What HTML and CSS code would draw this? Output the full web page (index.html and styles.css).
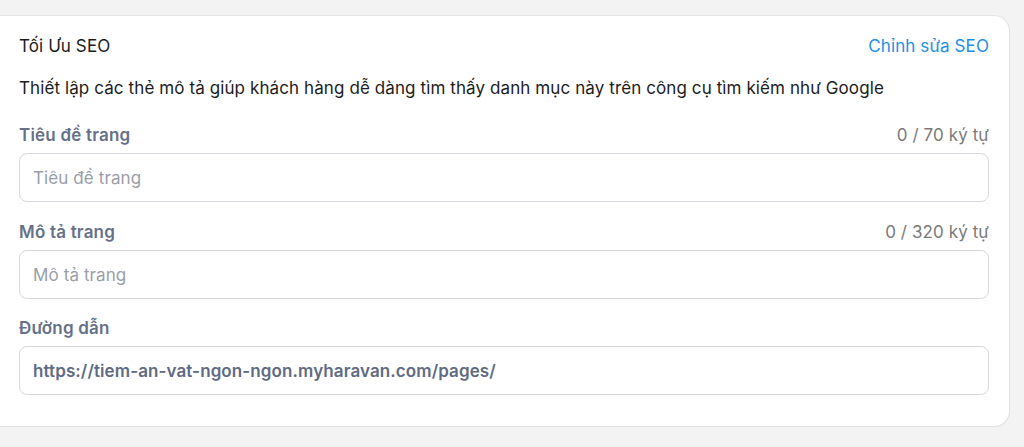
FILE: index.html
```html
<!DOCTYPE html>
<html lang="vi">
<head>
<meta charset="utf-8">
<link rel="stylesheet" href="styles.css">
</head>
<body>
<section class="card">
  <div class="card-head">
    <span class="title">Tối Ưu SEO</span>
    <a class="edit" href="#">Chỉnh sửa SEO</a>
  </div>
  <p class="desc">Thiết lập các thẻ mô tả giúp khách hàng dễ dàng tìm thấy danh mục này trên công cụ tìm kiếm như Google</p>
  <div class="field field-first">
    <div class="field-head"><label class="label">Tiêu đề trang</label><span class="count">0 / 70 ký tự</span></div>
    <div class="input placeholder">Tiêu đề trang</div>
  </div>
  <div class="field field-second">
    <div class="field-head"><label class="label">Mô tả trang</label><span class="count">0 / 320 ký tự</span></div>
    <div class="input placeholder">Mô tả trang</div>
  </div>
  <div class="field field-third">
    <div class="field-head"><label class="label">Đường dẫn</label></div>
    <div class="input url">https://tiem-an-vat-ngon-ngon.myharavan.com/pages/</div>
  </div>
</section>
</body>
</html>
```

FILE: styles.css
```css
html, body {
  margin: 0;
  padding: 0;
  background: #f3f3f3;
  font-family: Inter, "Noto Sans", "Liberation Sans", sans-serif;
  font-size: 17px;
  letter-spacing: 0.1px;
  color: #1f1f1f;
}
body {
  padding-top: 15px;
}
.card {
  width: 1010px;
  box-sizing: border-box;
  background: #fff;
  border: 1px solid #e3e3e6;
  border-left: none;
  border-radius: 0 16px 16px 0;
  padding: 18px 20px 31px 19px;
  box-shadow: 0 1px 1px rgba(0,0,0,0.03);
}
.card-head {
  display: flex;
  justify-content: space-between;
  align-items: center;
  line-height: 24px;
}
.title {
  color: #1c1c1c;
}
.edit {
  color: #1e90e6;
  text-decoration: none;
}
.desc {
  margin: 18px 0 0;
  line-height: 24px;
  color: #1c1c1c;
}
.field-first {
  margin-top: 23px;
}
.field-second {
  margin-top: 18px;
}
.field-third {
  margin-top: 17px;
}
.field-head {
  display: flex;
  justify-content: space-between;
  align-items: center;
  line-height: 24px;
  margin-bottom: 6px;
}
.label {
  font-weight: 600;
  letter-spacing: 0.2px;
  color: #667189;
}
.count {
  color: #7a7a7a;
}
.input {
  height: 49px;
  box-sizing: border-box;
  border: 1px solid #d6d8de;
  border-radius: 8px;
  padding: 0 13px;
  display: flex;
  align-items: center;
}
.placeholder {
  color: #9a9ea8;
}
.url {
  color: #5f6b82;
  font-weight: 600;
}
```
